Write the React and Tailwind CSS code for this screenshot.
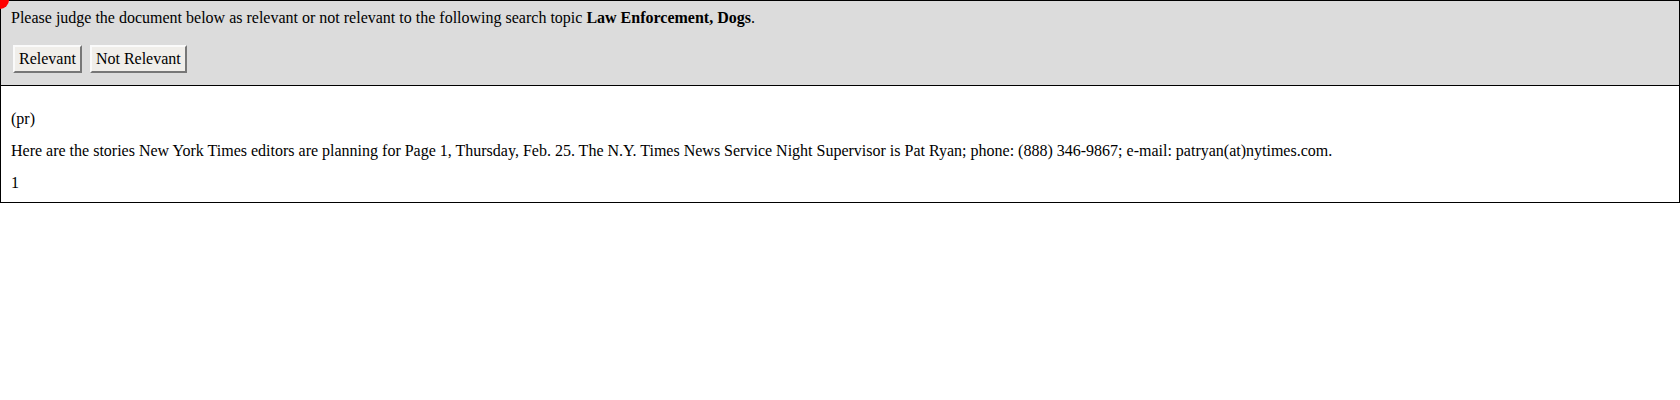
import React from 'react';

export default function App() {
  const serif = { fontFamily: '"Liberation Serif", "Times New Roman", serif' };

  return (
    <div className="relative w-[1680px] text-black text-[16px] leading-[18px]" style={serif}>
      {/* marcador rojo en la esquina */}
      <div className="absolute -left-[9px] -top-[9px] w-[18px] h-[18px] rounded-full bg-[#ff0000]" />

      <div className="border border-black bg-[#dcdcdc] pt-[8px] pb-[12px] px-[10px]">
        <div>
          Please judge the document below as relevant or not relevant to the following search topic{' '}
          <b>Law Enforcement, Dogs</b>.
        </div>
        <div className="flex gap-[8px] mt-[18px] ml-[2px]">
          <button className="h-[28px] px-[4px] bg-[#f0eeea] border-2 border-t-[#fafafa] border-l-[#fafafa] border-b-[#777] border-r-[#777]">
            Relevant
          </button>
          <button className="h-[28px] px-[4px] bg-[#f0eeea] border-2 border-t-[#fafafa] border-l-[#fafafa] border-b-[#777] border-r-[#777]">
            Not Relevant
          </button>
        </div>
      </div>

      <div className="border border-t-0 border-black pt-[24px] pb-[10px] px-[10px] flex flex-col gap-[14px]">
        <p>(pr)</p>
        <p>
          Here are the stories New York Times editors are planning for Page 1, Thursday, Feb. 25. The N.Y. Times
          News Service Night Supervisor is Pat Ryan; phone: (888) 346-9867; e-mail: patryan(at)nytimes.com.
        </p>
        <p>1</p>
      </div>
    </div>
  );
}
